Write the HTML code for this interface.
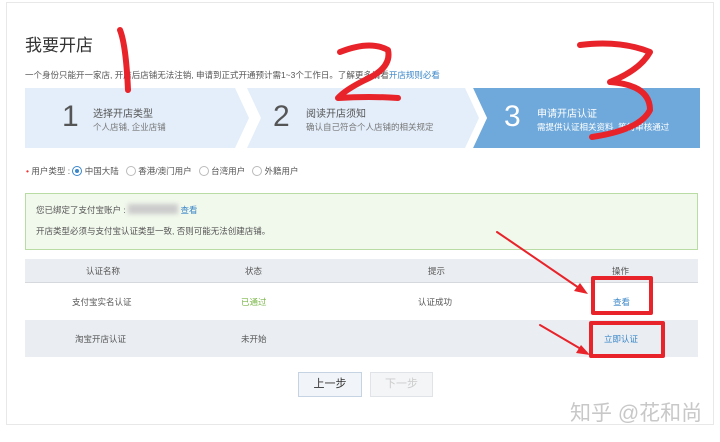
<!DOCTYPE html><html><head><meta charset="utf-8"><style>
*{margin:0;padding:0;box-sizing:border-box}
body{width:720px;height:442px;background:#fff;font-family:"Liberation Sans","Noto Sans CJK SC",sans-serif;color:#333;position:relative;overflow:hidden}
.card{position:absolute;left:6px;top:2px;width:708px;height:423px;border:1px solid #e8e8e8;background:#fff}
.a{position:absolute;white-space:nowrap}
.steps{position:absolute;left:25px;top:88px;width:675px;height:60px;background:#e3eefa}
.tbl{position:absolute;left:25px;width:673px}
</style></head><body>
<div class="card"></div>
<div class="a" style="left:25px;top:31px;font-size:17px;color:#333">我要开店</div>
<div class="a" style="left:25px;top:69px;font-size:8.5px;color:#555">一个身份只能开一家店, 开店后店铺无法注销, 申请到正式开通预计需1~3个工作日。了解更多请看<span style="color:#3a86c8">开店规则必看</span></div>
<div class="steps"></div>
<svg class="a" style="left:25px;top:88px" width="675" height="60"><polygon points="210,0 222,0 236,30 222,60 210,60 224,30" fill="#fff"/><polygon points="448,0 675,0 675,60 448,60 462,30" fill="#6fa9db"/><polygon points="440,0 448,0 462,30 448,60 440,60 454,30" fill="#fff"/></svg>
<div class="a" style="left:62px;top:100px;font-size:30px;color:#555">1</div>
<div class="a" style="left:93px;top:105px;font-size:10px;color:#555">选择开店类型</div>
<div class="a" style="left:93px;top:121px;font-size:8.5px;color:#777">个人店铺, 企业店铺</div>
<div class="a" style="left:273px;top:100px;font-size:30px;color:#555">2</div>
<div class="a" style="left:306px;top:105px;font-size:10px;color:#555">阅读开店须知</div>
<div class="a" style="left:306px;top:121px;font-size:8.5px;color:#777">确认自己符合个人店铺的相关规定</div>
<div class="a" style="left:504px;top:100px;font-size:30px;color:#fff">3</div>
<div class="a" style="left:537px;top:105px;font-size:10px;color:#fff">申请开店认证</div>
<div class="a" style="left:537px;top:121px;font-size:8.5px;color:#fff">需提供认证相关资料, 等待审核通过</div>
<div class="a" style="left:26px;top:165px;font-size:8.5px;color:#555"><span style="color:#e33">•</span> 用户类型 : <span style="display:inline-block;width:10px;height:10px;border:1px solid #3a86c8;border-radius:50%;vertical-align:-2px;position:relative"><span style="position:absolute;left:2px;top:2px;width:4px;height:4px;border-radius:50%;background:#3a86c8"></span></span> 中国大陆 &nbsp;&nbsp;<span style="display:inline-block;width:10px;height:10px;border:1px solid #bbb;border-radius:50%;vertical-align:-2px"></span> 香港/澳门用户 &nbsp;&nbsp;<span style="display:inline-block;width:10px;height:10px;border:1px solid #bbb;border-radius:50%;vertical-align:-2px"></span> 台湾用户 &nbsp;&nbsp;<span style="display:inline-block;width:10px;height:10px;border:1px solid #bbb;border-radius:50%;vertical-align:-2px"></span> 外籍用户</div>
<div class="a" style="left:25px;top:193px;width:673px;height:57px;background:#f1f8ec;border:1px solid #b8dca3"></div>
<div class="a" style="left:36px;top:204px;font-size:8.5px;color:#555">您已绑定了支付宝账户 : <span style="display:inline-block;width:50px;height:10px;background:#ccc;vertical-align:-1px;filter:blur(2px)"></span> <span style="color:#3a86c8">查看</span></div>
<div class="a" style="left:36px;top:225px;font-size:8.5px;color:#555">开店类型必须与支付宝认证类型一致, 否则可能无法创建店铺。</div>
<div class="tbl" style="top:259px;height:24px;background:#eaedf1;border-bottom:1px solid #d5d9de"></div>
<div class="tbl" style="top:320px;height:37px;background:#eaeef3"></div>
<div class="a" style="left:0;top:265px;font-size:8.5px;color:#555;width:720px">
<span class="a" style="left:86px">认证名称</span><span class="a" style="left:245px">状态</span><span class="a" style="left:428px">提示</span><span class="a" style="left:612px">操作</span></div>
<div class="a" style="left:0;top:296px;font-size:8.5px;color:#555;width:720px">
<span class="a" style="left:72px">支付宝实名认证</span><span class="a" style="left:241px;color:#7ab648">已通过</span><span class="a" style="left:418px">认证成功</span><span class="a" style="left:613px;color:#3a86c8">查看</span></div>
<div class="a" style="left:0;top:333px;font-size:8.5px;color:#555;width:720px">
<span class="a" style="left:75px">淘宝开店认证</span><span class="a" style="left:241px">未开始</span><span class="a" style="left:604px;color:#3a86c8">立即认证</span></div>
<div class="a" style="left:298px;top:372px;width:64px;height:25px;border:1px solid #c5d3e2;background:#f1f4f8;font-size:11px;color:#333;text-align:center;line-height:23px">上一步</div>
<div class="a" style="left:370px;top:372px;width:63px;height:25px;border:1px solid #e0e4e8;background:#f3f5f7;font-size:11px;color:#ccc;text-align:center;line-height:23px">下一步</div>
<div class="a" style="left:570px;top:397px;font-size:21px;color:#c8c8c8">知乎 @花和尚</div>
<svg class="a" style="left:0;top:0" width="720" height="442" fill="none" stroke="#e8232a" stroke-linecap="round" stroke-linejoin="round">
<path d="M120 30 Q126 45 128 90" stroke-width="6"/>
<path d="M340 52 Q370 40 388 50 Q392 68 365 80 Q345 90 338 98 Q370 96 398 98" stroke-width="6"/>
<path d="M580 45 Q620 40 650 52 Q640 70 610 82 Q650 85 650 110 Q640 130 592 137" stroke-width="6"/>
<rect x="593" y="278" width="58" height="35" stroke-width="4"/>
<rect x="591" y="323" width="72" height="33" stroke-width="4"/>
<path d="M497 232 L582 290" stroke-width="2"/>
<path d="M540 325 L586 352" stroke-width="2"/>
</svg>
<svg class="a" style="left:0;top:0" width="720" height="442" fill="#e8232a"><polygon points="588,294 574,291 580,283"/><polygon points="590,355 576,353 581,345"/></svg>
</body></html>
